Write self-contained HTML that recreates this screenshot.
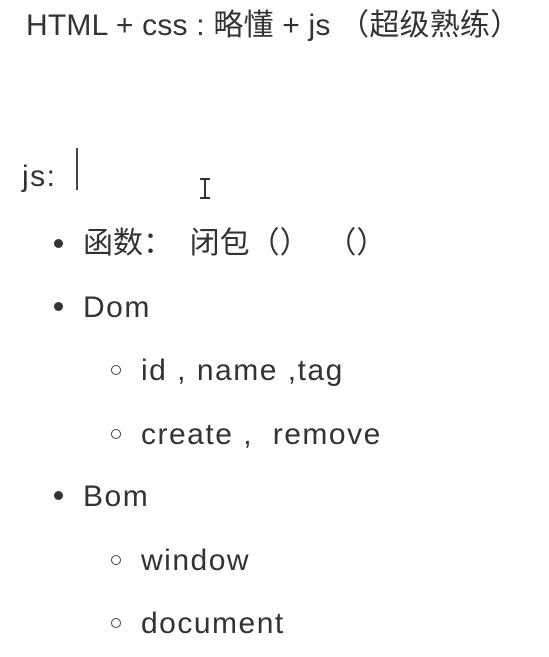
<!DOCTYPE html>
<html><head><meta charset="utf-8"><style>
html,body{margin:0;padding:0;background:#fff;width:549px;height:657px;overflow:hidden}
.l{position:absolute;font-family:"Liberation Sans","Noto Sans CJK SC",sans-serif;font-size:30px;line-height:32px;color:#333;white-space:pre;letter-spacing:1.5px}
.d{position:absolute;width:9px;height:9px;border-radius:50%;background:#333}
.c{position:absolute;width:8px;height:8px;border-radius:50%;border:1.5px solid #444}
</style></head><body>
<div class="l" style="left:26px;top:10px;letter-spacing:0.2px">HTML + css : 略懂 + js （超级熟练）</div>
<div class="l" style="left:22px;top:161px">js:</div>
<div style="position:absolute;left:76px;top:148px;width:1.5px;height:42px;background:#444"></div>
<div style="position:absolute;left:204px;top:178px;width:2px;height:20px;background:#333"></div>
<div style="position:absolute;left:200px;top:178px;width:10px;height:1.5px;background:#333"></div>
<div style="position:absolute;left:200px;top:197px;width:10px;height:1.5px;background:#333"></div>
<div class="d" style="left:54px;top:239px"></div>
<div class="l" style="left:83px;top:228px;letter-spacing:0">函数：  闭包（）  （）</div>
<div class="d" style="left:54px;top:302px"></div>
<div class="l" style="left:83px;top:292px">Dom</div>
<div class="c" style="left:111px;top:365px"></div>
<div class="l" style="left:141px;top:355px">id , name ,tag</div>
<div class="c" style="left:111px;top:429px"></div>
<div class="l" style="left:141px;top:419px">create ,  remove</div>
<div class="d" style="left:54px;top:491px"></div>
<div class="l" style="left:83px;top:481px">Bom</div>
<div class="c" style="left:111px;top:555px"></div>
<div class="l" style="left:141px;top:545px">window</div>
<div class="c" style="left:111px;top:618px"></div>
<div class="l" style="left:141px;top:608px">document</div>
</body></html>
